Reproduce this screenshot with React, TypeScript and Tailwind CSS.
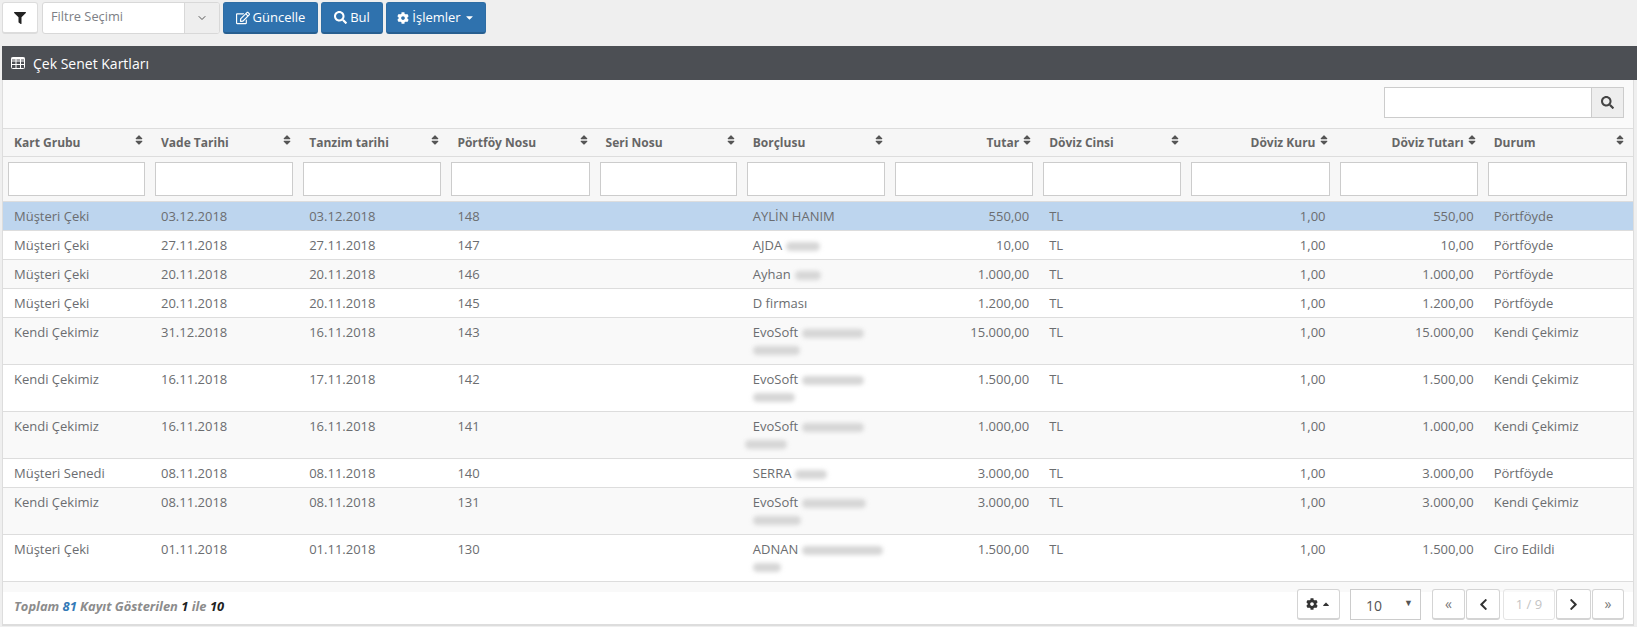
import React from "react";
import { FaFilter, FaRegEdit, FaSearch, FaCog, FaSort, FaCaretDown, FaCaretUp, FaChevronLeft, FaChevronRight } from "react-icons/fa";
import { ChevronDown } from "lucide-react";

type Row = { g: string; v: string; t: string; p: string; name: string; blur?: number; second?: React.ReactNode; tutar: string; durum: string };

function Blur({ w, className = "" }: { w: number; className?: string }) {
  return <span className={"inline-block h-[9px] rounded-full bg-[#d6d6d6] blur-[2px] align-middle " + className} style={{ width: w }} />;
}

const rows: Row[] = [
  { g: "Müşteri Çeki", v: "03.12.2018", t: "03.12.2018", p: "148", name: "AYLİN HANIM", tutar: "550,00", durum: "Pörtföyde" },
  { g: "Müşteri Çeki", v: "27.11.2018", t: "27.11.2018", p: "147", name: "AJDA", blur: 34, tutar: "10,00", durum: "Pörtföyde" },
  { g: "Müşteri Çeki", v: "20.11.2018", t: "20.11.2018", p: "146", name: "Ayhan", blur: 26, tutar: "1.000,00", durum: "Pörtföyde" },
  { g: "Müşteri Çeki", v: "20.11.2018", t: "20.11.2018", p: "145", name: "D firması", tutar: "1.200,00", durum: "Pörtföyde" },
  { g: "Kendi Çekimiz", v: "31.12.2018", t: "16.11.2018", p: "143", name: "EvoSoft", blur: 62, second: <Blur w={47} />, tutar: "15.000,00", durum: "Kendi Çekimiz" },
  { g: "Kendi Çekimiz", v: "16.11.2018", t: "17.11.2018", p: "142", name: "EvoSoft", blur: 62, second: <Blur w={42} />, tutar: "1.500,00", durum: "Kendi Çekimiz" },
  { g: "Kendi Çekimiz", v: "16.11.2018", t: "16.11.2018", p: "141", name: "EvoSoft", blur: 62, second: <Blur w={42} className="-ml-2" />, tutar: "1.000,00", durum: "Kendi Çekimiz" },
  { g: "Müşteri Senedi", v: "08.11.2018", t: "08.11.2018", p: "140", name: "SERRA", blur: 32, tutar: "3.000,00", durum: "Pörtföyde" },
  { g: "Kendi Çekimiz", v: "08.11.2018", t: "08.11.2018", p: "131", name: "EvoSoft", blur: 64, second: <Blur w={48} />, tutar: "3.000,00", durum: "Kendi Çekimiz" },
  { g: "Müşteri Çeki", v: "01.11.2018", t: "01.11.2018", p: "130", name: "ADNAN", blur: 81, second: <Blur w={28} />, tutar: "1.500,00", durum: "Ciro Edildi" },
];

const heads: { label: string; right?: boolean }[] = [
  { label: "Kart Grubu" },
  { label: "Vade Tarihi" },
  { label: "Tanzim tarihi" },
  { label: "Pörtföy Nosu" },
  { label: "Seri Nosu" },
  { label: "Borçlusu" },
  { label: "Tutar", right: true },
  { label: "Döviz Cinsi" },
  { label: "Döviz Kuru", right: true },
  { label: "Döviz Tutarı", right: true },
  { label: "Durum" },
];

function TableIcon() {
  return (
    <svg width="14" height="12" viewBox="0 0 14 12" className="shrink-0" fill="none" stroke="currentColor" strokeWidth="1">
      <rect x="0.5" y="0.5" width="13" height="11" rx="1" />
      <path d="M0.5 4h13M0.5 7.5h13M5 0.5v11M9.500 0.5v11" />
      <path d="M0.500 1.500h13" strokeWidth="2" />
    </svg>
  );
}

function PrimaryButton({ children, className }: { children: React.ReactNode; className: string }) {
  return (
    <button className={"flex h-[32px] items-center justify-center gap-[3px] rounded-[3px] border border-[#2e6da4] border-b-[#275f90] border-b-2 bg-[#2f72ae] text-[13px] text-white " + className}>
      {children}
    </button>
  );
}

function PagerButton({ children, className }: { children: React.ReactNode; className: string }) {
  return (
    <button className={"flex h-[31px] items-center justify-center rounded-[3px] border border-[#d4d4d4] border-b-2 bg-white text-[#333] " + className}>
      {children}
    </button>
  );
}

const cell = "py-[5px] pr-[11px] pl-[11px] leading-[18px]";
const cellRight = "py-[5px] pr-[9px] pl-[11px] text-right leading-[18px]";

export default function App() {
  return (
    <div className="h-[627px] w-[1637px] overflow-hidden bg-[#efefef] pl-[2px] text-[13px] text-[#6b6d70]" style={{ fontFamily: '"Open Sans", sans-serif' }}>
      <div className="flex h-[46px] items-start pt-[2px]">
        <button className="mr-[4px] flex h-[32px] w-[36px] items-center justify-center rounded-[3px] border border-[#dcdcdc] border-b-2 bg-white text-[#222]">
          <FaFilter size={12} />
        </button>
        <div className="mr-[3px] flex h-[32px] w-[178px] items-stretch overflow-hidden rounded-[3px] border border-[#d8d8d8] bg-white">
          <div className="flex flex-1 items-center pl-[8px] text-[12.800px] leading-none text-[#7d8086]">
            <span className="-mt-[3px]">Filtre Seçimi</span>
          </div>
          <div className="flex w-[35px] items-center justify-center border-l border-[#d8d8d8] bg-[#eeeeee] text-[#555]">
            <ChevronDown size={12} strokeWidth={2} />
          </div>
        </div>
        <PrimaryButton className="mr-[3px] w-[95px]"><FaRegEdit size={14} />Güncelle</PrimaryButton>
        <PrimaryButton className="mr-[3px] w-[62px]"><FaSearch size={13} />Bul</PrimaryButton>
        <PrimaryButton className="w-[100px]">
          <FaCog size={12} />İşlemler<FaCaretDown size={11} />
        </PrimaryButton>
      </div>

      <div className="flex h-[34px] items-center gap-[8px] bg-[#4c4f54] pl-[9px] text-[14px] text-white">
        <TableIcon />
        <span>Çek Senet Kartları</span>
      </div>

      <div className="w-[1632px] border-x border-[#dddddd] bg-[#fafafa]">
        <div className="flex h-[48px] items-start justify-end pt-[7px] pr-[9px]">
          <div className="flex h-[31px] w-[240px] border border-[#cccccc] bg-white">
            <div className="flex-1" />
            <div className="flex w-[32px] items-center justify-center border-l border-[#cccccc] bg-[#eeeeee] text-[#444]">
              <FaSearch size={13} />
            </div>
          </div>
        </div>

        <table className="w-full table-fixed border-collapse">
          <colgroup>
            <col className="w-[147px]" />
            <col className="w-[148.200px]" />
            <col className="w-[148.200px]" />
            <col className="w-[148.200px]" />
            <col className="w-[147.200px]" />
            <col className="w-[148.200px]" />
            <col className="w-[148.200px]" />
            <col className="w-[148.200px]" />
            <col className="w-[148.200px]" />
            <col className="w-[148.200px]" />
            <col className="w-[150.200px]" />
          </colgroup>
          <thead>
            <tr className="h-[28px] border-y border-[#dddddd] bg-[#f6f6f6]">
              {heads.map((h, i) => (
                <th key={h.label} className={"py-0 pl-[11px] text-[12px] font-bold text-[#666666] " + (i === 10 ? "pr-[7px]" : "pr-[5px]")}>
                  <div className={"flex items-center " + (h.right ? "justify-end gap-[2px]" : "justify-between")}>
                    <span>{h.label}</span>
                    <FaSort size={12} className="-mt-[5px] shrink-0 text-[#555]" />
                  </div>
                </th>
              ))}
            </tr>
            <tr className="border-b border-[#dddddd] bg-[#f7f7f7]">
              {heads.map((h, i) => (
                <th key={h.label} className={"py-[5px] pl-[5px] font-normal " + (i === 10 ? "pr-[6px]" : "pr-[5px]")}>
                  <input aria-label={h.label} className="block h-[34px] w-full border border-[#cccccc] bg-white" />
                </th>
              ))}
            </tr>
          </thead>
          <tbody>
            {rows.map((r, i) => (
              <tr key={r.p} className={"border-b border-[#dddddd] align-top " + (i === 0 ? "bg-[#bdd5ee]" : i % 2 === 0 ? "bg-[#f9f9f9]" : "bg-white")}>
                <td className={cell + " truncate"}>{r.g}</td>
                <td className={cell}>{r.v}</td>
                <td className={cell}>{r.t}</td>
                <td className={cell}>{r.p}</td>
                <td className={cell}></td>
                <td className={cell + " whitespace-nowrap"}>
                  <span>{r.name}</span>
                  {r.blur ? <Blur w={r.blur} className="ml-[4px]" /> : null}
                  {r.second ? <div className="flex h-[18px] items-center">{r.second}</div> : null}
                </td>
                <td className={cellRight}>{r.tutar}</td>
                <td className={cell}>TL</td>
                <td className={cellRight}>1,00</td>
                <td className={cellRight}>{r.tutar}</td>
                <td className={cell}>{r.durum}</td>
              </tr>
            ))}
          </tbody>
        </table>

        <div className="h-[10px] bg-[#f9f9f9]" />
        <div className="flex h-[34px] items-start justify-between border-b-2 border-[#dddddd] bg-white pr-[9px] pl-[11px]">
          <div className="pt-[5px] text-[12.900px] font-bold italic leading-[18px] text-[#8c8c8c]">
            Toplam <span className="text-[#337ab7]">81</span> Kayıt Gösterilen <span className="text-[#222]">1</span> ile <span className="text-[#222]">10</span>
          </div>
          <div className="-mt-[3px] flex items-start">
            <PagerButton className="mr-[10px] w-[43px] gap-[3px]">
              <FaCog size={12} />
              <FaCaretUp size={10} />
            </PagerButton>
            <div className="relative mr-[11px] flex h-[31px] w-[71px] items-center border border-[#cccccc] bg-white pt-[2px] pl-[15px] text-[#555]">
              <span className="text-[14px]">10</span>
              <span className="absolute top-[6px] right-[7px] text-[9px] text-[#555]">▼</span>
            </div>
            <PagerButton className="mr-[1px] w-[33px] font-normal text-[#777]"><span className="-mt-[2px] text-[14px]">«</span></PagerButton>
            <PagerButton className="mr-[3px] w-[34px]"><FaChevronLeft size={13} /></PagerButton>
            <div className="mr-[1px] flex h-[31px] w-[52px] items-center justify-center rounded-[3px] border border-[#e4e4e4] text-[13px] text-[#c4c4c4]">1 / 9</div>
            <PagerButton className="mr-[1px] w-[35px]"><FaChevronRight size={13} /></PagerButton>
            <PagerButton className="w-[32px] text-[#777]"><span className="-mt-[2px] text-[14px]">»</span></PagerButton>
          </div>
        </div>
      </div>
    </div>
  );
}
